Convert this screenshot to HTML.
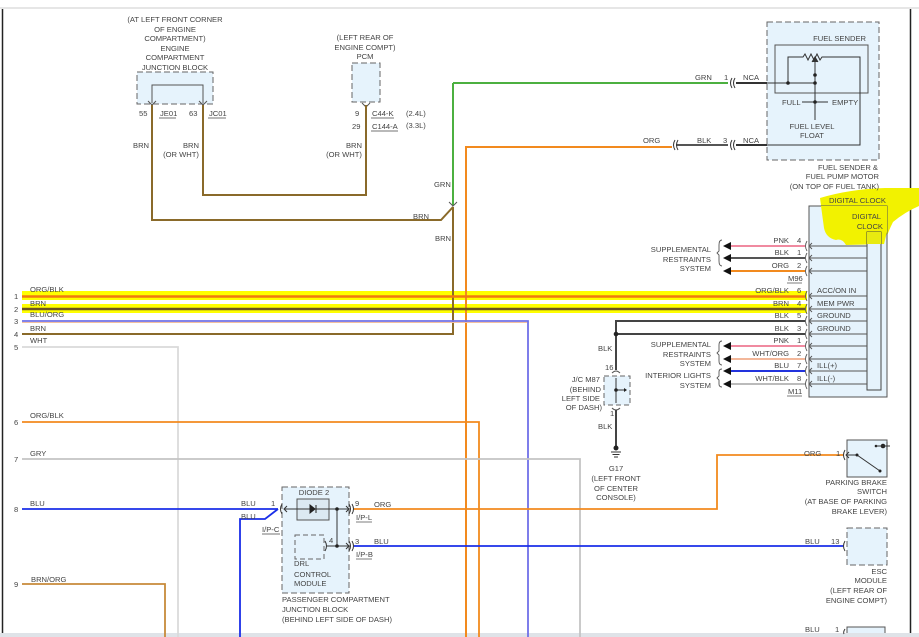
<!DOCTYPE html>
<html><head><meta charset="utf-8"><style>
html,body{margin:0;padding:0;background:#fff;}
svg{display:block;}
text{font-family:"Liberation Sans",sans-serif;font-size:7.6px;fill:#444;}
.r{text-anchor:end}.m{text-anchor:middle}
</style></head><body>
<svg width="919" height="637" viewBox="0 0 919 637" xmlns="http://www.w3.org/2000/svg">
<rect width="919" height="637" fill="#fff"/>
<line x1="0" y1="8" x2="919" y2="8" stroke="#ddd" stroke-width="1.5"/>
<line x1="2.5" y1="9" x2="2.5" y2="637" stroke="#222" stroke-width="1.5"/>
<line x1="910.5" y1="9" x2="910.5" y2="637" stroke="#222" stroke-width="1.5"/>
<rect x="0" y="633" width="919" height="4" fill="#dfe3e8"/>

<!-- yellow highlights -->
<path d="M820 198 Q850 189 885 188 L919 188 L919 206 Q905 212 893 222 Q888 232 884 244 L846 245 Q842 238 836 240 Q826 238 824 228 Z" fill="#f2f200"/>
<rect x="22" y="291" width="785" height="9" fill="#ffff00"/>
<rect x="22" y="304" width="785" height="9" fill="#ffff00"/>

<!-- engine junction block -->
<text class="m" x="175" y="22">(AT LEFT FRONT CORNER</text>
<text class="m" x="175" y="32">OF ENGINE</text>
<text class="m" x="175" y="41">COMPARTMENT)</text>
<text class="m" x="175" y="51">ENGINE</text>
<text class="m" x="175" y="60">COMPARTMENT</text>
<text class="m" x="175" y="70">JUNCTION BLOCK</text>
<rect x="137" y="72" width="76" height="32" fill="#e6f3fc" stroke="#666" stroke-dasharray="6,3"/>
<path d="M152 103 V85 H203 V103" fill="none" stroke="#555"/>
<path d="M148 101 l4 4 l4 -4 M199 101 l4 4 l4 -4" fill="none" stroke="#555"/>
<text x="139" y="116">55</text><text x="160" y="116">JE01</text><line x1="159" y1="118" x2="176" y2="118" stroke="#444" stroke-width=".7"/>
<text x="189" y="116">63</text><text x="209" y="116">JC01</text><line x1="208" y1="118" x2="226" y2="118" stroke="#444" stroke-width=".7"/>
<text x="133" y="148">BRN</text>
<text class="m" x="191" y="148">BRN</text><text class="m" x="181" y="157">(OR WHT)</text>

<!-- PCM -->
<text class="m" x="365" y="40">(LEFT REAR OF</text>
<text class="m" x="365" y="50">ENGINE COMPT)</text>
<text class="m" x="365" y="59">PCM</text>
<rect x="352" y="63" width="28" height="39" fill="#e6f3fc" stroke="#666" stroke-dasharray="6,3"/>
<path d="M362 103 l4 4 l4 -4" fill="none" stroke="#555"/>
<text x="355" y="116">9</text><text x="372" y="116">C44-K</text><line x1="371" y1="118" x2="394" y2="118" stroke="#444" stroke-width=".7"/><text x="406" y="116">(2.4L)</text>
<text x="352" y="129">29</text><text x="372" y="129">C144-A</text><line x1="371" y1="131" x2="398" y2="131" stroke="#444" stroke-width=".7"/><text x="406" y="128">(3.3L)</text>
<text class="m" x="354" y="148">BRN</text><text class="m" x="344" y="157">(OR WHT)</text>

<!-- brown upper wires -->
<g stroke="#8a6a2a" stroke-width="2" fill="none">
<path d="M152 105 V220 H441 L453 207"/>
<path d="M203 105 V195 H366 V105"/>
<path d="M453 207 V334 H22"/>
</g>
<path d="M453 83 V205 M453 83 H728" stroke="#4cb040" stroke-width="2" fill="none"/>
<path d="M449 202 l4 4 l4 -4" fill="none" stroke="#555"/>
<text x="434" y="187">GRN</text><text x="413" y="219">BRN</text><text x="435" y="241">BRN</text>

<!-- orange to fuel sender -->
<path d="M466 637 V147 H672" stroke="#f28a1e" stroke-width="2" fill="none"/>
<path d="M676 145 H728" stroke="#555" stroke-width="2"/>
<path d="M736 83 H767 M736 145 H767" stroke="#333" stroke-width="2"/>
<path d="M675 140 q-3 5 0 10 M678 140 q-3 5 0 10 M732 78 q-3 5 0 10 M735 78 q-3 5 0 10 M732 140 q-3 5 0 10 M735 140 q-3 5 0 10" stroke="#333" fill="none"/>
<text x="695" y="80">GRN</text><text x="724" y="80">1</text><text x="743" y="80">NCA</text>
<text x="643" y="143">ORG</text><text x="697" y="143">BLK</text><text x="723" y="143">3</text><text x="743" y="143">NCA</text>

<!-- fuel sender -->
<rect x="767" y="22" width="112" height="138" fill="#e6f3fc" stroke="#666" stroke-dasharray="6,3"/>
<rect x="775" y="45" width="93" height="48" fill="none" stroke="#555"/>
<text class="r" x="866" y="41">FUEL SENDER</text>
<g stroke="#333" fill="none">
<path d="M788 83 V57 H803 l2 -3 l3 6 l3 -6 l3 6 l3 -6 l3 6 l2 -3 H860 V145 H767"/>
<path d="M767 83 H815 M815 60 V120 M802 102 H828"/>
<path d="M812 62 l3 -5 l3 5" fill="#333"/>
</g>
<circle cx="788" cy="83" r="1.8" fill="#222"/><circle cx="815" cy="83" r="1.8" fill="#222"/><circle cx="815" cy="75" r="1.8" fill="#222"/><circle cx="815" cy="102" r="1.8" fill="#222"/>
<text x="782" y="105">FULL</text><text x="832" y="105">EMPTY</text>
<text class="m" x="812" y="129">FUEL LEVEL</text><text class="m" x="812" y="138">FLOAT</text>
<text class="r" x="878" y="170">FUEL SENDER &amp;</text>
<text class="r" x="879" y="179">FUEL PUMP MOTOR</text>
<text class="r" x="879" y="189">(ON TOP OF FUEL TANK)</text>

<!-- digital clock -->
<text x="829" y="203">DIGITAL CLOCK</text>
<rect x="809" y="206" width="78" height="191" fill="#e6f3fc" stroke="#555"/>
<path d="M821 206 L887 206 L887 232 L884 244 L846 245 Q842 238 836 240 Q826 238 824 228 Z" fill="#f2f200"/>
<rect x="867" y="232" width="14" height="158" fill="#e6f3fc" stroke="#444"/>
<path d="M867 232 h14 v12 h-14z" fill="#e8ea10"/>
<text class="r" x="881" y="219">DIGITAL</text><text class="r" x="883" y="229">CLOCK</text>
<g stroke="#555" stroke-width="1">
<path d="M810 246 H867 M810 258 H867 M810 271 H867 M810 296 H867 M810 309 H867 M810 321 H867 M810 334 H867 M810 346 H867 M810 359 H867 M810 371 H867 M810 384 H867"/>
</g>
<g stroke="#555" fill="none" stroke-width=".9">
<path d="M812 243 l-3 3 l3 3 M812 255 l-3 3 l3 3 M812 268 l-3 3 l3 3 M812 293 l-3 3 l3 3 M812 306 l-3 3 l3 3 M812 318 l-3 3 l3 3 M812 331 l-3 3 l3 3 M812 343 l-3 3 l3 3 M812 356 l-3 3 l3 3 M812 368 l-3 3 l3 3 M812 381 l-3 3 l3 3"/>
<path d="M807 241 q-3 5 0 10 M807 253 q-3 5 0 10 M807 266 q-3 5 0 10 M807 291 q-3 5 0 10 M807 304 q-3 5 0 10 M807 316 q-3 5 0 10 M807 329 q-3 5 0 10 M807 341 q-3 5 0 10 M807 354 q-3 5 0 10 M807 366 q-3 5 0 10 M807 379 q-3 5 0 10"/>
</g>
<text x="817" y="293">ACC/ON IN</text><text x="817" y="306">MEM PWR</text><text x="817" y="318">GROUND</text><text x="817" y="331">GROUND</text>
<text x="817" y="368">ILL(+)</text><text x="817" y="381">ILL(-)</text>

<!-- clock wires -->
<g stroke-width="2" fill="none">
<path d="M729 246 H805" stroke="#f08aa0"/>
<path d="M729 258 H805" stroke="#555"/>
<path d="M729 271 H805" stroke="#f28a1e"/>
<path d="M729 346 H805" stroke="#f08aa0"/>
<path d="M729 359 H805" stroke="#f3b79a"/>
<path d="M729 371 H805" stroke="#2233dd"/>
<path d="M729 384 H805" stroke="#bbb"/>
<path d="M22 296.5 H805" stroke="#f07a10" stroke-width="2.5"/>
<path d="M22 309 H805" stroke="#6b5420" stroke-width="2.5"/>
<path d="M616 370 V321 H805 M616 334 H805" stroke="#444"/>
</g>
<circle cx="616" cy="334" r="2.3" fill="#222"/>
<g fill="#111">
<path d="M723 246 l8 -4 v8z M723 258 l8 -4 v8z M723 271 l8 -4 v8z M723 346 l8 -4 v8z M723 359 l8 -4 v8z M723 371 l8 -4 v8z M723 384 l8 -4 v8z"/>
</g>
<g stroke="#555" fill="none" stroke-width=".9">
<path d="M722 240 q-3 0 -3 5 v6 l-2 2 l2 2 v6 q0 5 3 5"/>
<path d="M722 341 q-3 0 -3 4 v6 l-2 2 l2 2 v6 q0 4 3 4"/>
<path d="M722 369 q-3 0 -3 3 v4 l-2 2 l2 2 v4 q0 3 3 3"/>
</g>
<text class="r" x="711" y="252">SUPPLEMENTAL</text><text class="r" x="711" y="262">RESTRAINTS</text><text class="r" x="711" y="271">SYSTEM</text>
<text class="r" x="711" y="347">SUPPLEMENTAL</text><text class="r" x="711" y="357">RESTRAINTS</text><text class="r" x="711" y="366">SYSTEM</text>
<text class="r" x="711" y="378">INTERIOR LIGHTS</text><text class="r" x="711" y="388">SYSTEM</text>
<text class="r" x="789" y="243">PNK</text><text x="797" y="243">4</text>
<text class="r" x="789" y="255">BLK</text><text x="797" y="255">1</text>
<text class="r" x="789" y="268">ORG</text><text x="797" y="268">2</text>
<text x="788" y="281">M96</text><line x1="787" y1="283" x2="802" y2="283" stroke="#444" stroke-width=".7"/>
<text class="r" x="789" y="293">ORG/BLK</text><text x="797" y="293">6</text>
<text class="r" x="789" y="306">BRN</text><text x="797" y="306">4</text>
<text class="r" x="789" y="318">BLK</text><text x="797" y="318">5</text>
<text class="r" x="789" y="331">BLK</text><text x="797" y="331">3</text>
<text class="r" x="789" y="343">PNK</text><text x="797" y="343">1</text>
<text class="r" x="789" y="356">WHT/ORG</text><text x="797" y="356">2</text>
<text class="r" x="789" y="368">BLU</text><text x="797" y="368">7</text>
<text class="r" x="789" y="381">WHT/BLK</text><text x="797" y="381">8</text>
<text x="788" y="394">M11</text><line x1="787" y1="396" x2="802" y2="396" stroke="#444" stroke-width=".7"/>

<!-- J/C M87 -->
<text x="598" y="351">BLK</text>
<text x="605" y="370">16</text>
<rect x="604" y="376" width="26" height="29" fill="#e6f3fc" stroke="#666" stroke-dasharray="5,3"/>
<path d="M612 373 q4 -4 8 0 M612 408 q4 4 8 0" stroke="#555" fill="none"/>
<path d="M616 378 V403 M616 390 H624" stroke="#333"/>
<circle cx="616" cy="390" r="1.8" fill="#222"/>
<path d="M624 388 l3 2 l-3 2z" fill="#222"/>
<text class="r" x="600" y="382">J/C M87</text><text class="r" x="601" y="392">(BEHIND</text><text class="r" x="600" y="401">LEFT SIDE</text><text class="r" x="602" y="410">OF DASH)</text>
<text x="610" y="416">1</text>
<text x="598" y="429">BLK</text>
<path d="M616 410 V446" stroke="#444" stroke-width="2"/>
<circle cx="616" cy="448" r="2.5" fill="#222"/>
<path d="M611 452 h10 M612.5 454.5 h7 M614 457 h4" stroke="#333"/>
<text class="m" x="616" y="471">G17</text><text class="m" x="616" y="481">(LEFT FRONT</text><text class="m" x="616" y="491">OF CENTER</text><text class="m" x="616" y="500">CONSOLE)</text>

<!-- left wires -->
<g fill="none" stroke-width="1.8">
<path d="M22 321 H528 V637" stroke="#7070e8"/>
<path d="M22 322.5 H527" stroke="#f3c0a0" stroke-width="1"/>
<path d="M22 347 H178 V637" stroke="#dadada"/>
<path d="M22 422 H479 V637" stroke="#f28a1e"/>
<path d="M22 459 H580 V637" stroke="#c4c4c4"/>
<path d="M22 509 H278" stroke="#1a2ee8"/>
<path d="M240 637 V519 H265 L278 509" stroke="#1a2ee8"/>
<path d="M22 584 H165 V637" stroke="#c78a3a"/>
<path d="M354 509 H717 V455 H843" stroke="#f28a1e"/>
<path d="M354 546 H843" stroke="#1a2ee8"/>
</g>
<g>
<text x="14" y="299">1</text><text x="14" y="312">2</text><text x="14" y="324">3</text><text x="14" y="337">4</text><text x="14" y="350">5</text>
<text x="14" y="425">6</text><text x="14" y="462">7</text><text x="14" y="512">8</text><text x="14" y="587">9</text>
<text x="30" y="292">ORG/BLK</text><text x="30" y="306">BRN</text><text x="30" y="317">BLU/ORG</text><text x="30" y="331">BRN</text><text x="30" y="343">WHT</text>
<text x="30" y="418">ORG/BLK</text><text x="30" y="456">GRY</text><text x="30" y="506">BLU</text><text x="31" y="582">BRN/ORG</text>
</g>

<!-- passenger junction block -->
<rect x="282" y="487" width="67" height="106" fill="#e6f3fc" stroke="#666" stroke-dasharray="6,3"/>
<rect x="297" y="499" width="32" height="21" fill="#dce9f2" stroke="#555"/>
<rect x="295" y="535" width="29" height="24" fill="#e6f3fc" stroke="#666" stroke-dasharray="5,3"/>
<text class="m" x="314" y="495">DIODE 2</text>
<path d="M284 509 H350 M337 509 V546 M326 546 H350" stroke="#333"/>
<path d="M310 505 l5 4 l-5 4z M316 505 v8" fill="#222" stroke="#222"/>
<circle cx="337" cy="509" r="1.8" fill="#222"/><circle cx="337" cy="546" r="1.8" fill="#222"/>
<path d="M287 506 l-3 3 l3 3" stroke="#333" fill="none"/>
<path d="M282 504 q-3 5 0 10 M349 504 q3 5 0 10 M352 504 q3 5 0 10 M349 541 q3 5 0 10 M352 541 q3 5 0 10 M325 541 q3 5 0 10 M346 506 l3 3 l-3 3 M346 543 l3 3 l-3 3" stroke="#333" fill="none"/>
<text x="329" y="543">4</text>
<text x="294" y="566">DRL</text><text x="294" y="577">CONTROL</text><text x="294" y="586">MODULE</text>
<text x="282" y="602">PASSENGER COMPARTMENT</text><text x="282" y="612">JUNCTION BLOCK</text><text x="282" y="622">(BEHIND LEFT SIDE OF DASH)</text>
<text x="241" y="506">BLU</text><text x="271" y="506">1</text><text x="241" y="519">BLU</text>
<text x="262" y="532">I/P-C</text><line x1="262" y1="534" x2="280" y2="534" stroke="#444" stroke-width=".7"/>
<text x="355" y="506">9</text><text x="374" y="507">ORG</text>
<text x="356" y="520">I/P-L</text><line x1="356" y1="522" x2="372" y2="522" stroke="#444" stroke-width=".7"/>
<text x="355" y="544">3</text><text x="374" y="544">BLU</text>
<text x="356" y="557">I/P-B</text><line x1="356" y1="559" x2="372" y2="559" stroke="#444" stroke-width=".7"/>

<!-- parking brake -->
<rect x="847" y="440" width="40" height="37" fill="#e6f3fc" stroke="#555"/>
<path d="M845 450 q-3 5 0 10 M849 452 l-3 3 l3 3 M847 455 H857 L880 471" stroke="#333" fill="none"/>
<circle cx="857" cy="455" r="1.5" fill="#222"/><circle cx="880" cy="471" r="1.5" fill="#222"/>
<circle cx="876" cy="446" r="1.3" fill="#222"/><circle cx="883" cy="446" r="2.3" fill="#222"/>
<path d="M876 446 H890 M887 442 v8" stroke="#333"/>
<text x="804" y="456">ORG</text><text x="836" y="456">1</text>
<text class="r" x="887" y="485">PARKING BRAKE</text><text class="r" x="887" y="494">SWITCH</text><text class="r" x="887" y="504">(AT BASE OF PARKING</text><text class="r" x="887" y="514">BRAKE LEVER)</text>

<!-- ESC -->
<rect x="847" y="528" width="40" height="37" fill="#e6f3fc" stroke="#666" stroke-dasharray="6,3"/>
<path d="M845 541 q-3 5 0 10" stroke="#333" fill="none"/>
<text x="805" y="544">BLU</text><text x="831" y="544">13</text>
<text class="r" x="887" y="574">ESC</text><text class="r" x="887" y="583">MODULE</text><text class="r" x="887" y="593">(LEFT REAR OF</text><text class="r" x="887" y="603">ENGINE COMPT)</text>
<text x="805" y="632">BLU</text><text x="835" y="632">1</text>
<path d="M847 633 V627 H885 V633" stroke="#555" fill="#e6f3fc"/>
<path d="M845 629 q-2 3 -1 5" stroke="#333" fill="none"/>
</svg>
</body></html>
